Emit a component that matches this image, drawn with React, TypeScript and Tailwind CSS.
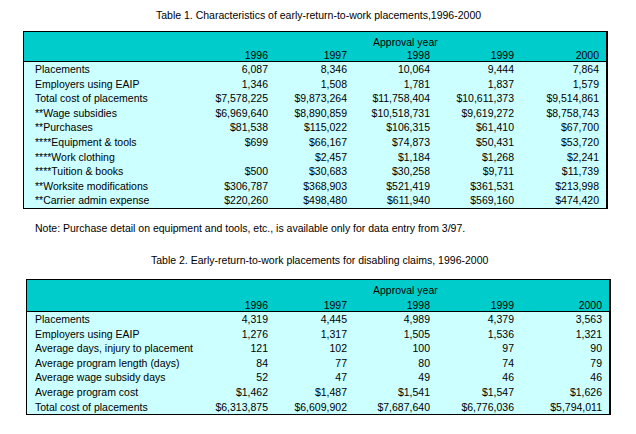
const years = ['1996', '1997', '1998', '1999', '2000'];

const table1: [string, string[]][] = [
  ['Placements', ['6,087', '8,346', '10,064', '9,444', '7,864']],
  ['Employers using EAIP', ['1,346', '1,508', '1,781', '1,837', '1,579']],
  ['Total cost of placements', ['$7,578,225', '$9,873,264', '$11,758,404', '$10,611,373', '$9,514,861']],
  ['**Wage subsidies', ['$6,969,640', '$8,890,859', '$10,518,731', '$9,619,272', '$8,758,743']],
  ['**Purchases', ['$81,538', '$115,022', '$106,315', '$61,410', '$67,700']],
  ['****Equipment & tools', ['$699', '$66,167', '$74,873', '$50,431', '$53,720']],
  ['****Work clothing', ['', '$2,457', '$1,184', '$1,268', '$2,241']],
  ['****Tuition & books', ['$500', '$30,683', '$30,258', '$9,711', '$11,739']],
  ['**Worksite modifications', ['$306,787', '$368,903', '$521,419', '$361,531', '$213,998']],
  ['**Carrier admin expense', ['$220,260', '$498,480', '$611,940', '$569,160', '$474,420']],
];

const table2: [string, string[]][] = [
  ['Placements', ['4,319', '4,445', '4,989', '4,379', '3,563']],
  ['Employers using EAIP', ['1,276', '1,317', '1,505', '1,536', '1,321']],
  ['Average days, injury to placement', ['121', '102', '100', '97', '90']],
  ['Average program length (days)', ['84', '77', '80', '74', '79']],
  ['Average wage subsidy days', ['52', '47', '49', '46', '46']],
  ['Average program cost', ['$1,462', '$1,487', '$1,541', '$1,547', '$1,626']],
  ['Total cost of placements', ['$6,313,875', '$6,609,902', '$7,687,640', '$6,776,036', '$5,794,011']],
];

export default function App() {
  return (
    <div
      className="w-[636px] h-[434px] bg-white text-black text-[10.5px] leading-none overflow-hidden"
      style={{ fontFamily: '"Liberation Sans", Arial, sans-serif' }}
    >
      {/* Table 1 */}
      <div className="h-[31px] pt-[10px] pl-[156px] whitespace-nowrap">
        Table 1. Characteristics of early-return-to-work placements,1996-2000
      </div>
      <div className="ml-[23px] w-[585px] border border-black border-r-2 bg-[#ccffff]">
        <div className="h-[30px] bg-[#00cccc] border-b border-black relative">
          <div className="absolute left-[349px] top-[5px]">Approval year</div>
          <div className="grid grid-cols-[164px_80px_79px_83px_84px_85px] pt-[18px]">
            <div />
            {years.map((y) => (
              <div key={y} className="text-right">{y}</div>
            ))}
          </div>
        </div>
        {table1.map(([label, vals]) => (
          <div key={label} className="grid grid-cols-[164px_80px_79px_83px_84px_85px] h-[14.6px] items-center">
            <div className="pl-[11px] whitespace-nowrap">{label}</div>
            {vals.map((v, i) => (
              <div key={i} className="text-right whitespace-nowrap">{v}</div>
            ))}
          </div>
        ))}
      </div>

      <div className="h-[37px] pt-[14px] pl-[35px] whitespace-nowrap">
        Note: Purchase detail on equipment and tools, etc., is available only for data entry from 3/97.
      </div>

      {/* Table 2 */}
      <div className="h-[33px] pt-[9px] pl-[151px] whitespace-nowrap">
        Table 2. Early-return-to-work placements for disabling claims, 1996-2000
      </div>
      <div className="ml-[26px] w-[585px] border border-black border-r-2 bg-[#ccffff]">
        <div className="h-[32px] bg-[#00cccc] border-b border-black relative">
          <div className="absolute left-[346px] top-[5px]">Approval year</div>
          <div className="grid grid-cols-[161px_80px_79px_83px_84px_88px] pt-[20px]">
            <div />
            {years.map((y) => (
              <div key={y} className="text-right">{y}</div>
            ))}
          </div>
        </div>
        {table2.map(([label, vals]) => (
          <div key={label} className="grid grid-cols-[161px_80px_79px_83px_84px_88px] h-[14.6px] items-center">
            <div className="pl-[8px] whitespace-nowrap">{label}</div>
            {vals.map((v, i) => (
              <div key={i} className="text-right whitespace-nowrap">{v}</div>
            ))}
          </div>
        ))}
      </div>
    </div>
  );
}
